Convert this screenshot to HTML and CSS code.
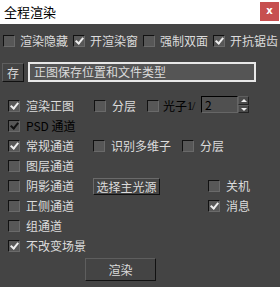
FILE: index.html
```html
<!DOCTYPE html>
<html lang="zh">
<head>
  <meta charset="UTF-8">
  <title>全程渲染</title>
  <link rel="stylesheet" href="styles.css">
</head>
<body>
  <div id="dialog">
    <div class="titlebar">
      <span class="title">全程渲染</span>
      <span class="close">x</span>
    </div>

    <div class="opts">
      <label class="chk w70"><i class="box"></i>渲染隐藏</label>
      <label class="chk w70"><i class="box on"></i>开渲染窗</label>
      <label class="chk w70"><i class="box"></i>强制双面</label>
      <label class="chk"><i class="box on"></i>开抗锯齿</label>
    </div>

    <div class="save">
      <span class="btn btn-save">存</span>
      <span class="field">正图保存位置和文件类型</span>
    </div>

    <div class="main">
      <div class="row">
        <label class="chk c1"><i class="box on"></i>渲染正图</label>
        <label class="chk c2a"><i class="box"></i>分层</label>
        <label class="chk c3a dim"><i class="box"></i>光子<span class="num">1/</span></label>
        <span class="spin"><span class="spin-val">2</span><span class="spin-btns"><i class="up"></i><i class="down"></i></span></span>
      </div>
      <div class="row">
        <label class="chk dim"><i class="box on"></i>PSD 通道</label>
      </div>
      <div class="row">
        <label class="chk c1b"><i class="box on"></i>常规通道</label>
        <label class="chk c2b"><i class="box"></i>识别多维子</label>
        <label class="chk"><i class="box"></i>分层</label>
      </div>
      <div class="row">
        <label class="chk"><i class="box"></i>图层通道</label>
      </div>
      <div class="row">
        <label class="chk c1b"><i class="box"></i>阴影通道</label>
        <span class="btn btn-light">选择主光源</span>
        <label class="chk right"><i class="box"></i>关机</label>
      </div>
      <div class="row">
        <label class="chk"><i class="box"></i>正侧通道</label>
        <label class="chk right"><i class="box on"></i>消息</label>
      </div>
      <div class="row">
        <label class="chk"><i class="box"></i>组通道</label>
      </div>
      <div class="row">
        <label class="chk"><i class="box on"></i>不改变场景</label>
      </div>
    </div>

    <div class="foot">
      <span class="btn btn-render">渲染</span>
    </div>
  </div>
</body>
</html>
```

FILE: styles.css
```css
*{
  margin: 0;
  padding: 0;
  box-sizing: border-box;
}

body {
  background: #444;
  font-family: "Noto Sans CJK SC", "Liberation Sans", sans-serif;
  font-size: 12px;
  color: #dcdcdc;
}

#dialog {
  width: 280px;
  height: 287px;
}

.titlebar {
  height: 24px;
  background: #fff;
  display: flex;
  align-items: flex-start;
  justify-content: space-between;
}

.title {
  color: #000;
  font-size: 13px;
  line-height: 24px;
  padding-left: 4px;
}

.close {
  width: 19px;
  height: 19px;
  margin: 2px 1px 0 0;
  background: #c75050;
  color: #fff;
  font-family: "DejaVu Sans", sans-serif;
  font-weight: bold;
  font-size: 10px;
  line-height: 17px;
  text-align: center;
}

.chk {
  display: flex;
  align-items: center;
  white-space: nowrap;
  line-height: 20px;
  height: 20px;
}

.box {
  display: inline-block;
  flex: none;
  width: 12px;
  height: 12px;
  margin-right: 6px;
  border: 1px solid;
  border-color: #111 #6a6a6a #6a6a6a #111;
  background: #575757;
  position: relative;
}

.box.on::after {
  content: '';
  position: absolute;
  left: 3px;
  top: 0px;
  width: 3px;
  height: 6px;
  border-right: 2px solid #eee;
  border-bottom: 2px solid #eee;
  transform: rotate(40deg);
}

.chk.dim {
  color: #000;
}

.chk.dim .box.on::after {
  border-color: #111;
}

/* 第一行 */
.opts {
  display: flex;
  padding: 7px 0 0 3px;
}

.opts .box {
  margin-right: 5px;
}

.w70 {
  width: 70px;
}

/* 存 */
.save {
  display: flex;
  align-items: center;
  height: 20px;
  margin-top: 11px;
  padding-left: 2px;
}

.btn {
  display: inline-block;
  text-align: center;
  border: 1px solid;
  border-color: #5e5e5e #111 #111 #5e5e5e;
  background: #444;
  color: #dcdcdc;
}

.btn-save {
  width: 22px;
  height: 19px;
  line-height: 17px;
}

.field {
  display: inline-block;
  width: 228px;
  height: 20px;
  margin-left: 4px;
  padding-left: 4px;
  border: 2px solid #e8e8e8;
  background: #555;
  line-height: 16px;
}

/* 主体 */
.main {
  margin-top: 14px;
  padding-left: 8px;
}

.row {
  display: flex;
  align-items: center;
  height: 20px;
}

.c1 { width: 86px; }
.c2a { width: 53px; }
.c3a { width: 54px; }
.c1b { width: 85px; }
.c2b { width: 89px; }

.c3a .box {
  margin-right: 4px;
}

.num {
  font-family: "Liberation Serif", serif;
  font-size: 12px;
  letter-spacing: -1px;
}

.right {
  margin-left: auto;
  width: 72px;
}

.spin {
  display: flex;
  height: 17px;
  margin-top: -3px;
}

.spin-val {
  width: 37px;
  height: 17px;
  border: 1px solid;
  border-color: #000 #666 #666 #000;
  background: #505050;
  color: #000;
  line-height: 15px;
  padding-left: 3px;
}

.spin-btns {
  width: 11px;
  display: flex;
  flex-direction: column;
  background: #4a4a4a;
}

.spin-btns i {
  flex: 1;
  position: relative;
  border: 1px solid;
  border-color: #5e5e5e #222 #222 #5e5e5e;
}

.spin-btns .up::after,
.spin-btns .down::after {
  content: '';
  position: absolute;
  left: 2px;
  top: 2px;
  border-left: 3px solid transparent;
  border-right: 3px solid transparent;
}

.spin-btns .up::after {
  border-bottom: 3px solid #eee;
}

.spin-btns .down::after {
  top: 2px;
  border-top: 3px solid #eee;
}

.btn-light {
  width: 67px;
  height: 17px;
  line-height: 15px;
  border-color: #6a6a6a #111 #111 #6a6a6a;
}

/* 渲染 */
.foot {
  display: flex;
  padding: 2px 0 0 85px;
}

.btn-render {
  width: 71px;
  height: 23px;
  line-height: 21px;
}
```
